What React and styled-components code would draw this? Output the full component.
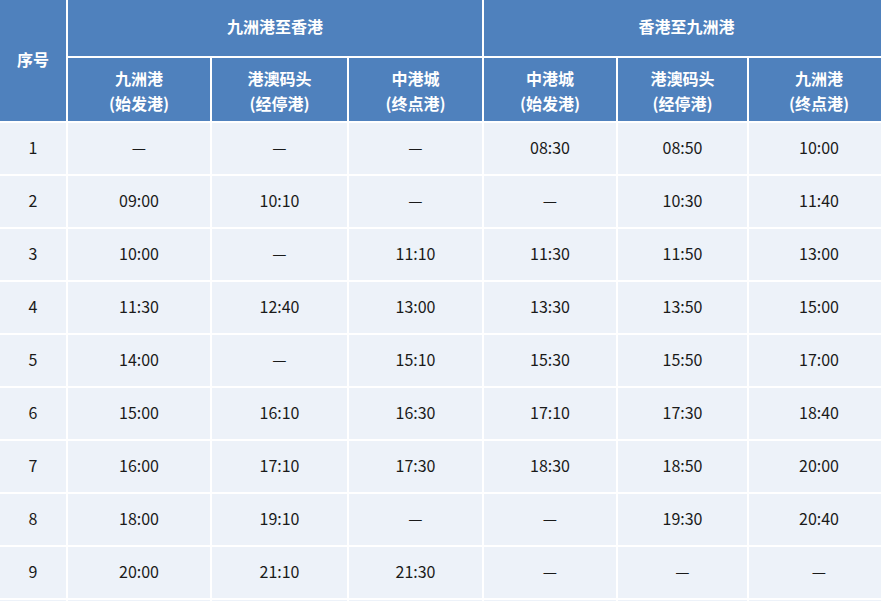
import React from "react";
import styled, { createGlobalStyle } from "styled-components";

const Global = createGlobalStyle`
  html, body { margin: 0; padding: 0; background: #ffffff; }
  body { font-family: "Noto Sans CJK SC", "Noto Sans", sans-serif; overflow: hidden; }
`;

const Viewport = styled.div`
  width: 881px;
  height: 601px;
  overflow: hidden;
  background: #ffffff;
`;

const Grid = styled.div`
  display: grid;
  grid-template-columns: 66px 142px 135px 133px 132px 129px 140px;
  grid-auto-rows: 51px;
  grid-template-rows: 56px 63px;
  gap: 2px;
  background: #ffffff;
  width: max-content;
`;

const HeadCell = styled.div`
  background: #4f81bd;
  color: #ffffff;
  font-size: 16px;
  font-weight: 700;
  line-height: 25px;
  padding-bottom: ${(p) => (p.$sub ? "0" : "3px")};
  padding-top: ${(p) => (p.$sub ? "2px" : "0")};
  box-sizing: border-box;
  display: flex;
  align-items: center;
  justify-content: center;
  text-align: center;
  grid-column: ${(p) => p.$col || "auto"};
  grid-row: ${(p) => p.$row || "auto"};
`;

const Cell = styled.div`
  background: #edf2f9;
  color: #1a1a1a;
  font-size: 16px;
  line-height: 20px;
  padding-bottom: 3px;
  box-sizing: border-box;
  display: flex;
  align-items: center;
  justify-content: center;
`;

const rows = [
  ["1", "—", "—", "—", "08:30", "08:50", "10:00"],
  ["2", "09:00", "10:10", "—", "—", "10:30", "11:40"],
  ["3", "10:00", "—", "11:10", "11:30", "11:50", "13:00"],
  ["4", "11:30", "12:40", "13:00", "13:30", "13:50", "15:00"],
  ["5", "14:00", "—", "15:10", "15:30", "15:50", "17:00"],
  ["6", "15:00", "16:10", "16:30", "17:10", "17:30", "18:40"],
  ["7", "16:00", "17:10", "17:30", "18:30", "18:50", "20:00"],
  ["8", "18:00", "19:10", "—", "—", "19:30", "20:40"],
  ["9", "20:00", "21:10", "21:30", "—", "—", "—"],
];

const subHeads = [
  ["九洲港", "(始发港)"],
  ["港澳码头", "(经停港)"],
  ["中港城", "(终点港)"],
  ["中港城", "(始发港)"],
  ["港澳码头", "(经停港)"],
  ["九洲港", "(终点港)"],
];

export default function App() {
  return (
    <Viewport>
      <Global />
      <Grid>
        <HeadCell $col="1" $row="1 / span 2">序号</HeadCell>
        <HeadCell $col="2 / span 3" $row="1">九洲港至香港</HeadCell>
        <HeadCell $col="5 / span 3" $row="1">香港至九洲港</HeadCell>
        {subHeads.map(([a, b], i) => (
          <HeadCell key={i} $sub $col={`${i + 2}`} $row="2">
            {a}
            <br />
            {b}
          </HeadCell>
        ))}
        {rows.map((r, ri) =>
          r.map((v, ci) => <Cell key={`${ri}-${ci}`}>{v}</Cell>)
        )}
        {Array.from({ length: 7 }).map((_, i) => (
          <Cell key={`tail-${i}`} />
        ))}
      </Grid>
    </Viewport>
  );
}
